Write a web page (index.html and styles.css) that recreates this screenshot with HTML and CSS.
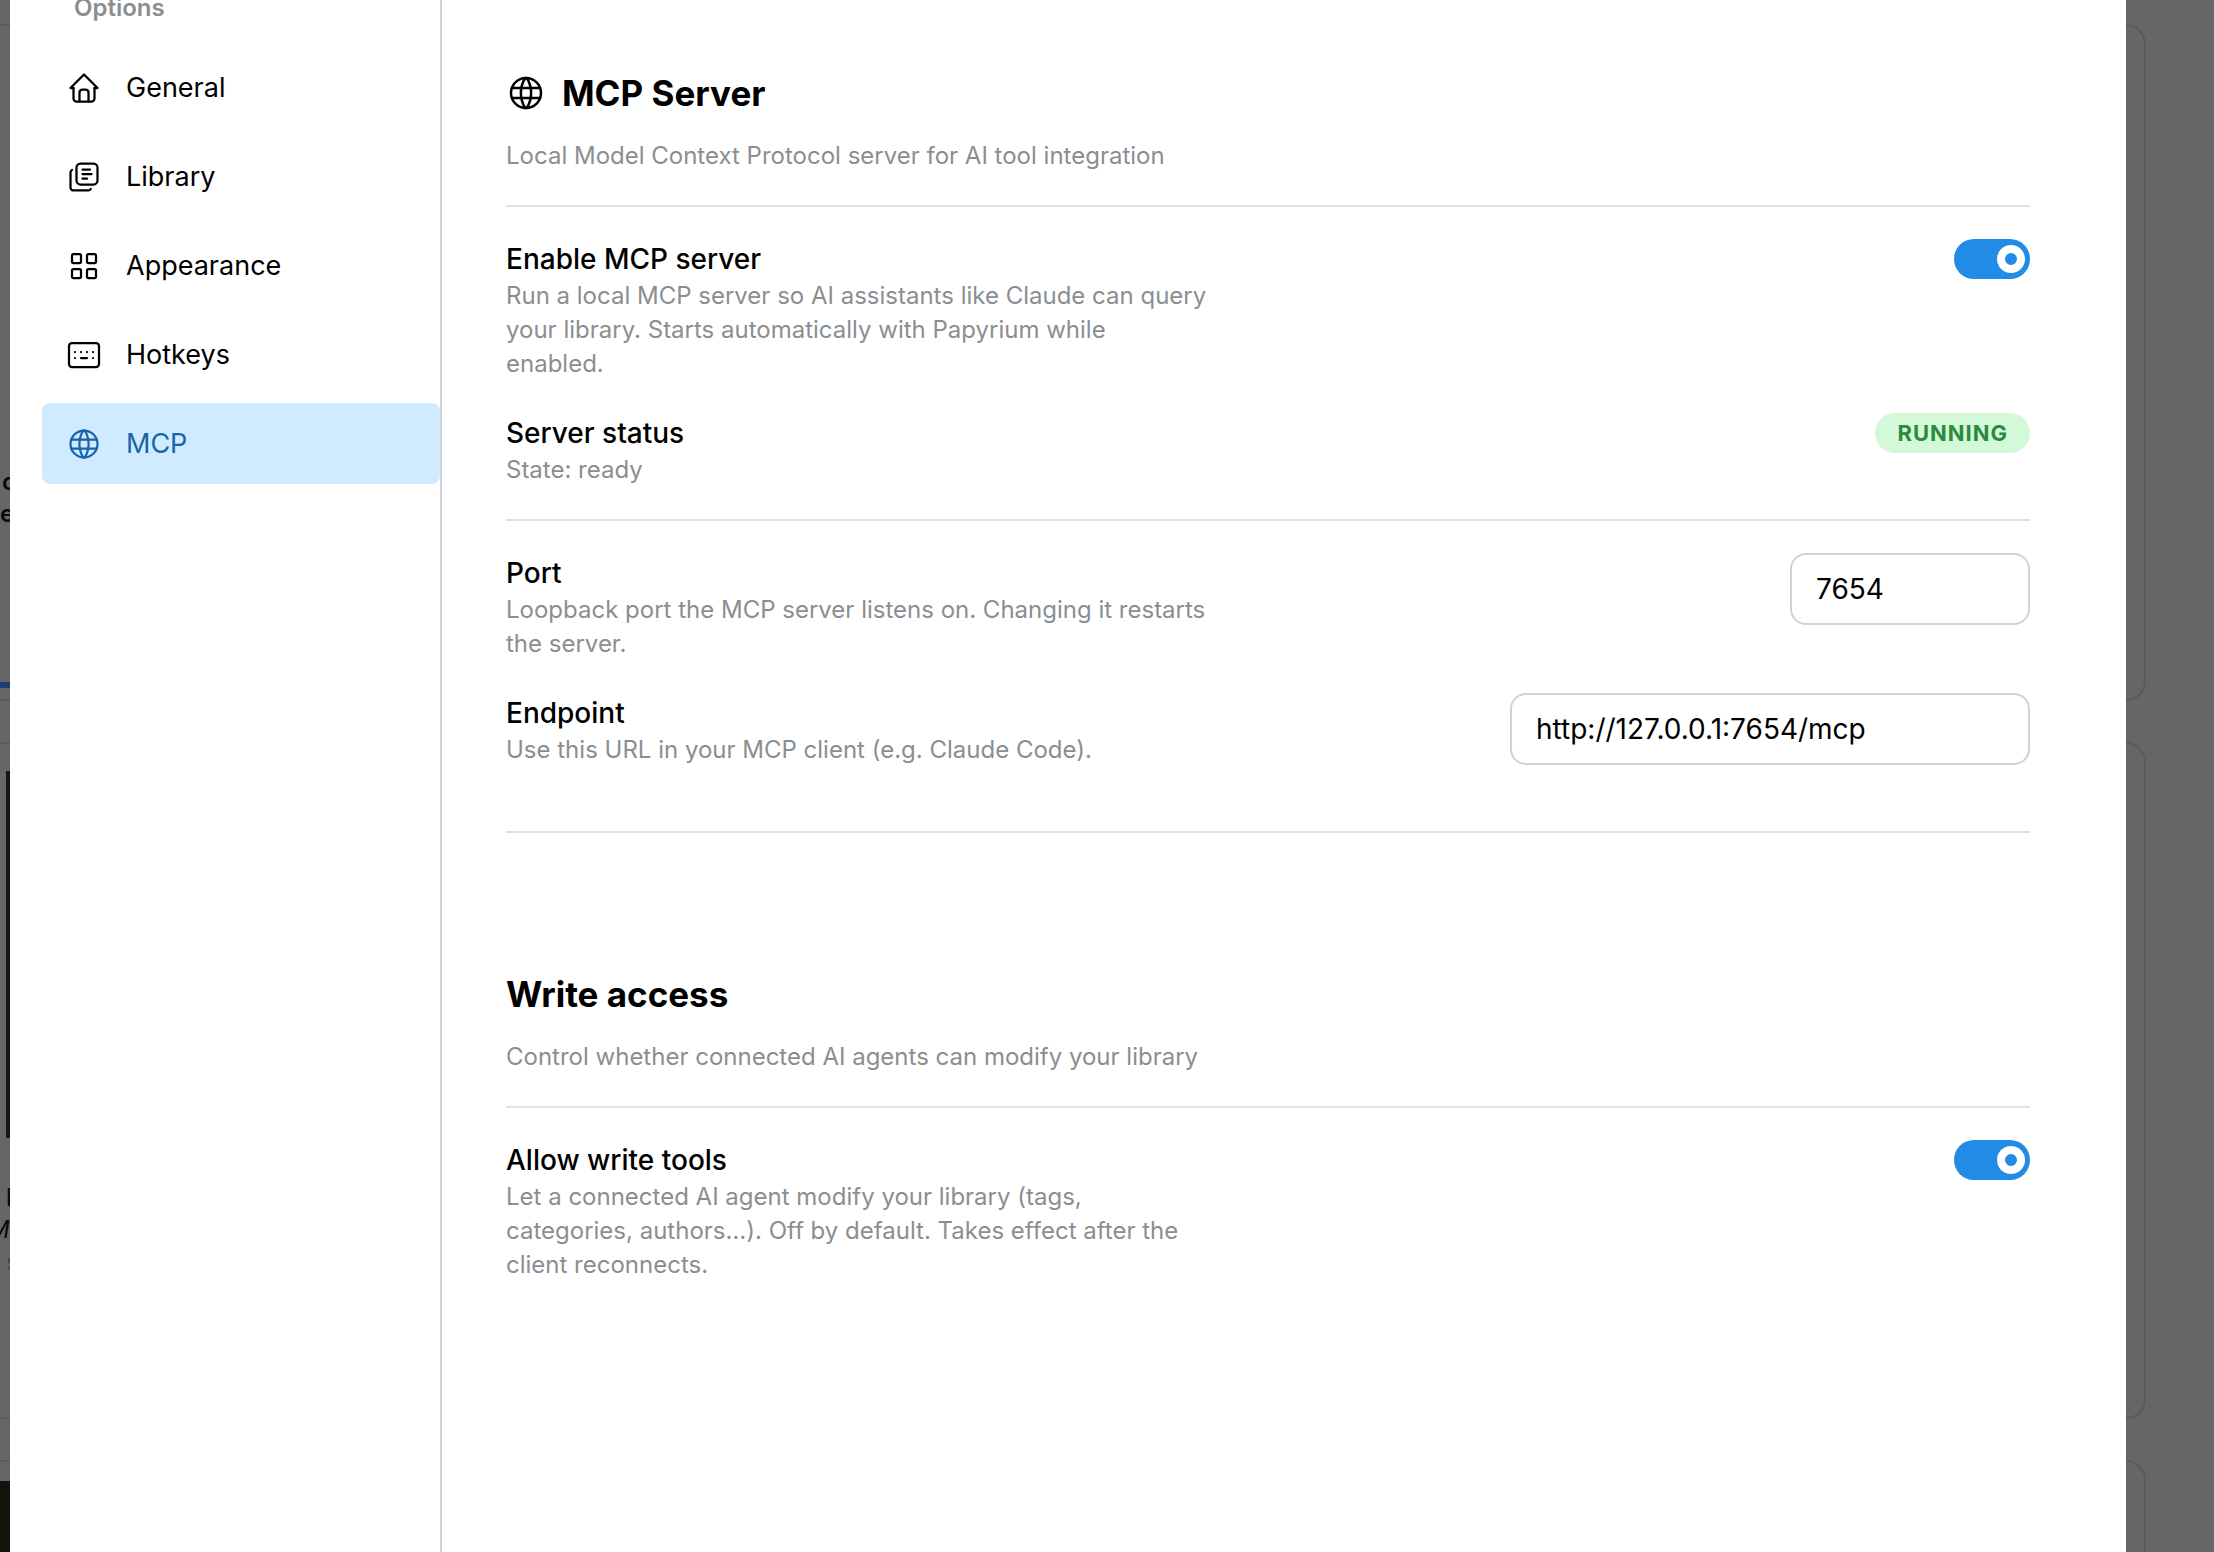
FILE: index.html
```html
<!DOCTYPE html>
<html lang="en">
<head>
<meta charset="utf-8">
<title>Papyrium – Settings</title>
<link rel="stylesheet" href="styles.css">
</head>
<body>
<svg class="sprite" aria-hidden="true">
  <symbol id="icon-home" viewBox="0 0 24 24"><path d="M5 12H3l9-9 9 9h-2"/><path d="M5 12v7a2 2 0 0 0 2 2h10a2 2 0 0 0 2-2v-7"/><path d="M9 21v-6a2 2 0 0 1 2-2h2a2 2 0 0 1 2 2v6"/></symbol>
  <symbol id="icon-library" viewBox="0 0 24 24"><rect x="7" y="3" width="14" height="14" rx="2.667"/><path d="M4.012 7.26A2.005 2.005 0 0 0 3 8.997v10c0 1.1.9 2 2 2h10c.75 0 1.158-.385 1.5-1"/><path d="M11 7h5M11 10h6M11 13h3"/></symbol>
  <symbol id="icon-grid" viewBox="0 0 24 24"><rect x="4" y="4" width="6" height="6" rx="1"/><rect x="14" y="4" width="6" height="6" rx="1"/><rect x="4" y="14" width="6" height="6" rx="1"/><rect x="14" y="14" width="6" height="6" rx="1"/></symbol>
  <symbol id="icon-keyboard" viewBox="0 0 24 24"><rect x="2" y="4" width="20" height="16" rx="2"/><path d="M6 10v.01M10 10v.01M14 10v.01M18 10v.01M6 14v.01M18 14v.01M10 14h4"/></symbol>
  <symbol id="icon-world" viewBox="0 0 24 24"><circle cx="12" cy="12" r="9"/><path d="M3.6 9h16.8M3.6 15h16.8"/><path d="M11.5 3a17 17 0 0 0 0 18M12.5 3a17 17 0 0 1 0 18"/></symbol>
</svg>

<div class="app">
  <div class="backdrop" aria-hidden="true">
    <div class="card">
      <p class="card-note"><span>c</span><br>er</p>
      <div class="card-progress"></div>
    </div>
    <div class="card">
      <div class="cover"></div>
      <p class="card-title">I</p>
      <p class="card-author">M</p>
      <p class="card-meta">s</p>
    </div>
    <div class="card card-last">
      <div class="cover-dark"></div>
    </div>
  </div>

  <div class="modal" role="dialog" aria-label="Settings">
    <aside class="sidebar">
      <h2 class="sidebar-title">Options</h2>
      <nav class="nav">
        <a class="nav-item" href="#general"><svg class="icon"><use href="#icon-home"/></svg>General</a>
        <a class="nav-item" href="#library"><svg class="icon"><use href="#icon-library"/></svg>Library</a>
        <a class="nav-item" href="#appearance"><svg class="icon"><use href="#icon-grid"/></svg>Appearance</a>
        <a class="nav-item" href="#hotkeys"><svg class="icon"><use href="#icon-keyboard"/></svg>Hotkeys</a>
        <a class="nav-item active" href="#mcp" aria-current="page"><svg class="icon"><use href="#icon-world"/></svg>MCP</a>
      </nav>
    </aside>

    <main class="content">
      <section class="section">
        <header class="section-head">
          <h1 class="section-title"><svg class="icon icon-lg"><use href="#icon-world"/></svg>MCP Server</h1>
          <p class="hint">Local Model Context Protocol server for AI tool integration</p>
        </header>
        <div class="group">
          <div class="row">
            <div class="row-text">
              <label class="row-label" for="enable">Enable MCP server</label>
              <p class="hint">Run a local MCP server so AI assistants like Claude can query your library. Starts automatically with Papyrium while enabled.</p>
            </div>
            <input class="switch" id="enable" type="checkbox" role="switch" checked>
          </div>
          <div class="row">
            <div class="row-text">
              <h3 class="row-label">Server status</h3>
              <p class="hint">State: ready</p>
            </div>
            <span class="badge">RUNNING</span>
          </div>
        </div>
        <div class="group group-last">
          <div class="row">
            <div class="row-text">
              <label class="row-label" for="port">Port</label>
              <p class="hint">Loopback port the MCP server listens on. Changing it restarts the server.</p>
            </div>
            <input class="field field-port" id="port" type="text" inputmode="numeric" value="7654">
          </div>
          <div class="row">
            <div class="row-text">
              <label class="row-label" for="endpoint">Endpoint</label>
              <p class="hint">Use this URL in your MCP client (e.g. Claude Code).</p>
            </div>
            <input class="field field-url" id="endpoint" type="text" value="http://127.0.0.1:7654/mcp" readonly>
          </div>
        </div>
      </section>

      <section class="section">
        <header class="section-head">
          <h1 class="section-title">Write access</h1>
          <p class="hint">Control whether connected AI agents can modify your library</p>
        </header>
        <div class="group">
          <div class="row">
            <div class="row-text">
              <label class="row-label" for="write">Allow write tools</label>
              <p class="hint">Let a connected AI agent modify your library (tags, categories, authors…). Off by default. Takes effect after the client reconnects.</p>
            </div>
            <input class="switch" id="write" type="checkbox" role="switch" checked>
          </div>
        </div>
      </section>
    </main>
  </div>
</div>
</body>
</html>
```

FILE: styles.css
```css
*,
*::before {
  box-sizing: border-box;
  margin: 0;
}

body {
  font-family: Inter, "Liberation Sans", sans-serif;
  font-size: 28px;
  color: #000;
  background: #666;
}

.sprite {
  display: none;
}

/* The library page and the dialog share one grid cell, so the dialog lies on top */
.app {
  display: grid;
  height: 100vh;
  overflow: hidden;
}

.backdrop,
.modal {
  grid-area: 1 / 1;
  min-width: 0;
}

.backdrop {
  display: flex;
  flex-direction: column;
  gap: 41px;
  height: 100vh;
  padding: 24px 68px 0 0;
  overflow: hidden;
}

.card {
  flex: none;
  height: 677px;
  border: 2px solid #5b5b5b;
  border-left: 0;
  border-radius: 0 20px 20px 0;
  font-size: 24px;
  line-height: 32px;
  color: #0a0a0a;
}

.card-note {
  padding-top: 440px;
  font-weight: 600;
  text-indent: -5px;
}

.card-note span {
  padding-left: 7px;
}

.card-progress {
  width: 10px;
  height: 6px;
  margin-top: 152px;
  background: #1a426c;
}

.cover {
  width: 4px;
  height: 367px;
  margin: 27px 0 0 6px;
  background: #151716;
}

.card-title {
  padding: 44px 0 0 6px;
  font-weight: 600;
}

.card-author {
  text-indent: -12px;
  font-style: italic;
}

.card-meta {
  padding-left: 6px;
  color: #444;
}

.card-last {
  height: 400px;
}

.cover-dark {
  width: 10px;
  height: 300px;
  margin-top: 19px;
  background: #15140c;
}

.modal {
  display: flex;
  margin: 0 88px 0 10px;
  background: #fff;
}

.sidebar {
  flex: none;
  width: 432px;
  padding-left: 32px;
  border-right: 2px solid #d0d2d8;
}

.sidebar-title {
  padding-left: 32px;
  font-size: 24px;
  font-weight: 600;
  line-height: 16px;
  color: #8b8e91;
}

.nav {
  display: flex;
  flex-direction: column;
  gap: 8px;
  margin-top: 31px;
}

.nav-item {
  display: flex;
  align-items: center;
  gap: 24px;
  height: 81px;
  padding: 0 24px;
  border-radius: 8px;
  font-size: 27px;
  color: inherit;
  text-decoration: none;
}

.nav-item.active {
  background: #d0ebff;
  color: #1864ab;
}

.icon {
  flex: none;
  width: 36px;
  height: 36px;
  fill: none;
  stroke: currentColor;
  stroke-width: 1.5;
  stroke-linecap: round;
  stroke-linejoin: round;
}

.icon-lg {
  width: 40px;
  height: 40px;
}

.content {
  flex: 1;
  min-width: 0;
  display: flex;
  flex-direction: column;
  gap: 139px;
  padding: 71px 96px 0 64px;
}

.section-head {
  display: flex;
  flex-direction: column;
  gap: 24px;
  padding-bottom: 32px;
  border-bottom: 2px solid #e0e2e3;
}

.section-title {
  display: flex;
  align-items: center;
  gap: 16px;
  font-size: 35px;
  font-weight: 700;
  line-height: 44px;
}

.hint {
  font-size: 24px;
  line-height: 34px;
  color: #8b8e91;
}

.group {
  display: flex;
  flex-direction: column;
  gap: 32px;
  padding: 32px 0;
}

.group-last {
  padding-bottom: 64px;
  border-top: 2px solid #e0e2e3;
  border-bottom: 2px solid #e0e2e3;
}

.row {
  display: flex;
  align-items: flex-start;
  justify-content: space-between;
  gap: 32px;
}

.row-text {
  max-width: 702px;
}

.row-label {
  display: block;
  font-size: 28px;
  font-weight: 500;
  line-height: 40px;
}

.switch {
  appearance: none;
  display: flex;
  flex: none;
  align-items: center;
  justify-content: flex-end;
  width: 76px;
  height: 40px;
  padding: 0 5px;
  border-radius: 20px;
  background: #ced4da;
}

.switch:checked {
  background: #228be6;
}

.switch::before {
  content: "";
  width: 28px;
  height: 28px;
  border: 8px solid #fff;
  border-radius: 50%;
}

.badge {
  padding: 0 22px;
  border-radius: 20px;
  background: #d3f9d8;
  color: #2b8a3e;
  font-size: 22px;
  font-weight: 700;
  line-height: 40px;
  letter-spacing: 1px;
}

.field {
  height: 72px;
  padding: 0 24px;
  border: 2px solid #d0d2d6;
  border-radius: 16px;
  background: #fff;
  font: inherit;
  color: inherit;
}

.field-port {
  width: 240px;
}

.field-url {
  width: 520px;
}
```
